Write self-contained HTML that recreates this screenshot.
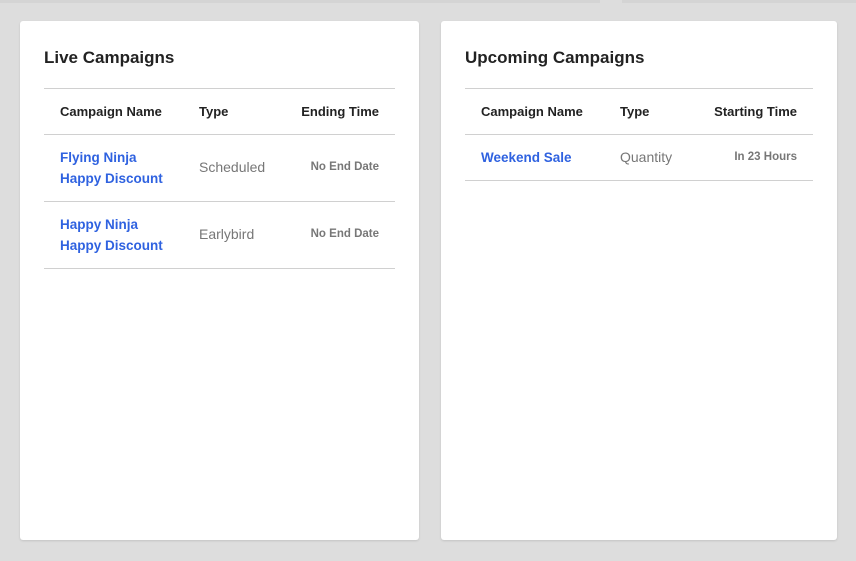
<!DOCTYPE html>
<html><head><style>
body{margin:0;width:856px;height:561px;background:#dddddd;font-family:"Liberation Sans",sans-serif;position:relative;overflow:hidden}
.top{position:absolute;top:0;height:3px;background:#d4d4d4}
.card{position:absolute;top:21px;height:519px;background:#fff;border-radius:3px;box-shadow:0 1px 2px rgba(0,0,0,.12)}
.card h2{position:absolute;left:24px;top:27px;margin:0;font-size:17px;font-weight:bold;color:#222}
.tbl{position:absolute;left:24px;top:67px;width:351px}
.row{position:relative;border-top:1px solid #d0d0d0}
.hd{height:45px}
.hd span{position:absolute;top:15px;font-size:13px;font-weight:bold;color:#222}
.r{height:66px}
.r1{height:45px}
.n{position:absolute;left:16px;font-size:13.5px;font-weight:bold;color:#2f62e0;line-height:21px}
.t{position:absolute;left:155px;font-size:14px;color:#777}
.e{position:absolute;right:16px;font-size:11.5px;font-weight:bold;color:#777}
.last{border-top:1px solid #d0d0d0}
</style></head><body>
<div class="top" style="left:0;width:600px"></div><div class="top" style="left:622px;width:234px"></div>
<div class="card" style="left:20px;width:399px">
<h2>Live Campaigns</h2>
<div class="tbl">
<div class="row hd"><span style="left:16px">Campaign Name</span><span style="left:155px">Type</span><span style="right:16px">Ending Time</span></div>
<div class="row r"><div class="n" style="top:12px">Flying Ninja<br>Happy Discount</div><div class="t" style="top:24px">Scheduled</div><div class="e" style="top:26px">No End Date</div></div>
<div class="row r"><div class="n" style="top:12px">Happy Ninja<br>Happy Discount</div><div class="t" style="top:24px">Earlybird</div><div class="e" style="top:26px">No End Date</div></div>
<div class="last"></div>
</div></div>
<div class="card" style="left:441px;width:396px">
<h2>Upcoming Campaigns</h2>
<div class="tbl" style="width:348px">
<div class="row hd"><span style="left:16px">Campaign Name</span><span style="left:155px">Type</span><span style="right:16px">Starting Time</span></div>
<div class="row r1"><div class="n" style="top:12px">Weekend Sale</div><div class="t" style="top:14px">Quantity</div><div class="e" style="top:16px">In 23 Hours</div></div>
<div class="last"></div>
</div></div>
</body></html>
